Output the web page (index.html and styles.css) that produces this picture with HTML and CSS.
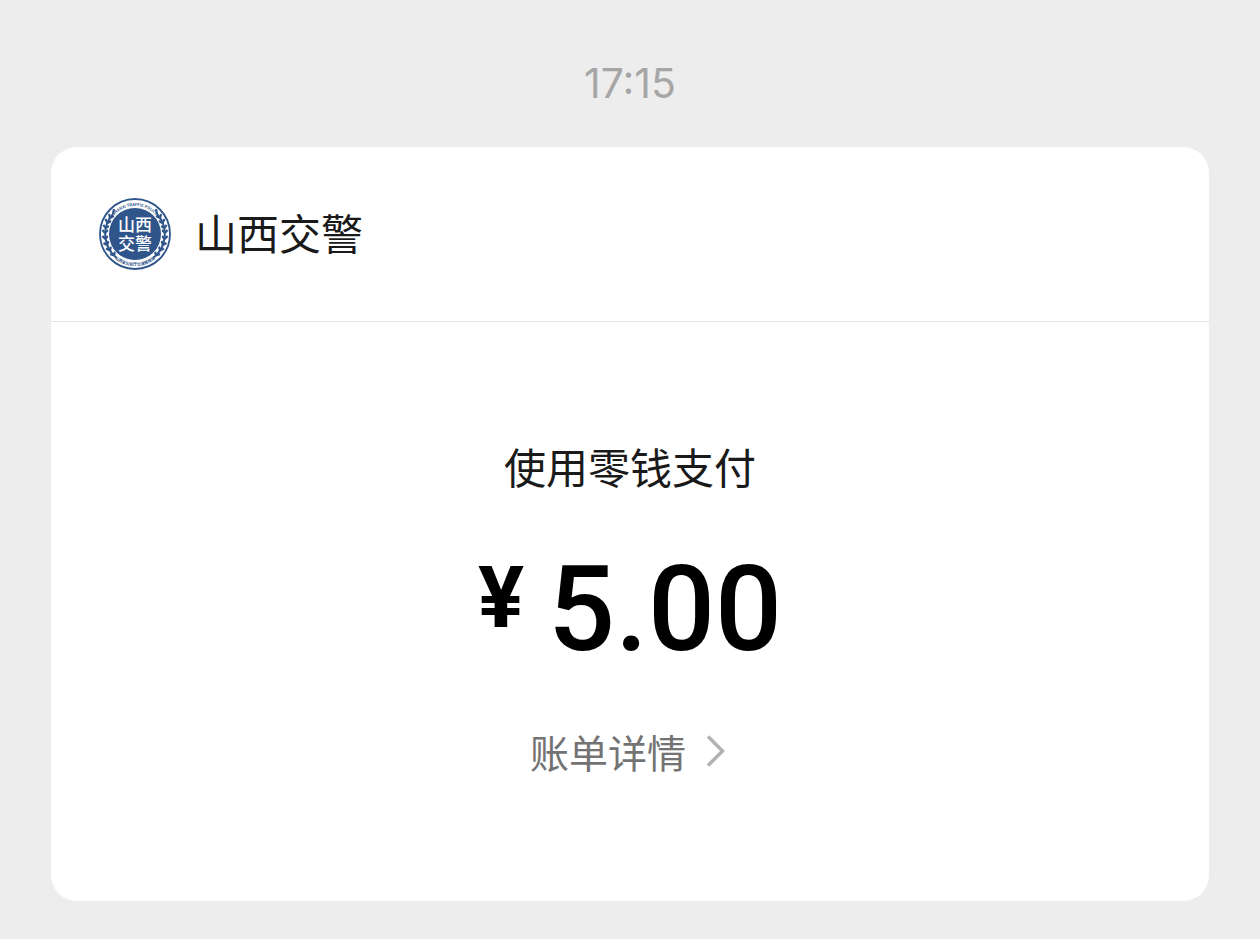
FILE: index.html
```
<!DOCTYPE html>
<html lang="zh-CN">
<head>
  <meta charset="UTF-8" />
  <meta name="viewport" content="width=device-width, initial-scale=1.0"/>
  <title>山西交警</title>
  <link rel="stylesheet" href="styles.css">
</head>
<body>
  <time class="time" datetime="17:15">17:15</time>

  <main class="card">
    <header class="card-header">
      <svg class="logo" viewBox="0 0 72 72" aria-hidden="true">
        <defs>
          <path id="arc-top" d="M8 36a28 28 0 0 1 56 0" />
          <path id="arc-bottom" d="M4 36a32 32 0 0 0 64 0" />
          <!-- wheat ear, left side -->
          <g id="ear">
            <path d="M18 60A30 30 0 0 1 14 16" fill="none" stroke="#2f558b" stroke-width="2" />
            <g fill="none" stroke="#2f558b" stroke-width="2.2">
              <path d="M14 16l1-5M11 20l-1-4M11 20l4-2M8.500 25l-2-4M8.500 25l4-2M6.800 30l-2.500-3M6.800 30l3-2M6 35l-2.500-3M6 35l3-3M6.300 41l-3-3M6.300 41l2.500-3M8 47l-3.500-2M8 47l1.500-4M11 52.500l-4-2M11 52.500l1-4M15 57.500l-4-1.500M15 57.500l1-4" />
            </g>
          </g>
        </defs>
        <circle cx="36" cy="36" r="35" fill="#fff" stroke="#2f558b" stroke-width="1.8" />
        <use href="#ear" />
        <use href="#ear" transform="matrix(-1 0 0 1 72 0)" />
        <circle cx="36" cy="36" r="26.5" fill="#2f558b" stroke="#fff" />
        <g class="logo-ring">
          <text><textPath href="#arc-top" startOffset="50%">SHANXI TRAFFIC POLICE</textPath></text>
          <text><textPath href="#arc-bottom" startOffset="50%">山西省公安厅交通管理局</textPath></text>
        </g>
        <g class="logo-name">
          <text x="36" y="33">山西</text>
          <text x="36" y="52">交警</text>
        </g>
      </svg>
      <h1 class="name">山西交警</h1>
    </header>

    <section class="card-body">
      <h2 class="method">使用零钱支付</h2>
      <p class="amount"><span class="currency">¥</span>5.00</p>
      <a href="#" class="detail">
        账单详情
        <svg class="arrow" viewBox="0 0 24 34" aria-hidden="true">
          <path d="M2 2.5L16.5 17L2 31.5" />
        </svg>
      </a>
    </section>
  </main>
</body>
</html>
```
FILE: styles.css
```
* {
  margin: 0;
  padding: 0;
  box-sizing: border-box;
}

body {
  padding: 59px 51px 38px;
  background: #ededed;
  color: #1a1a1a;
  font-family: "Noto Sans CJK SC", sans-serif;
}

.time {
  display: block;
  margin-bottom: 40px;
  color: #a6a6a6;
  font-family: Inter, sans-serif;
  font-size: 41px;
  line-height: 48px;
  text-align: center;
}

.card {
  background: #fff;
  border-radius: 26px;
}

.card-header {
  display: flex;
  align-items: center;
  gap: 24px;
  padding: 51px 48px;
  border-bottom: 1px solid #e5e5e5;
}

.logo {
  width: 72px;
  height: 72px;
}

.logo-ring {
  fill: #2f558b;
  font-size: 4px;
  font-weight: 700;
  text-anchor: middle;
}

.logo-name {
  fill: #fff;
  font-size: 17px;
  font-weight: 500;
  text-anchor: middle;
}

.name,
.method {
  padding-bottom: 4px;
  font-size: 42px;
  font-weight: 400;
  line-height: 60px;
}

.card-body {
  display: flex;
  flex-direction: column;
  align-items: center;
  padding: 114px 48px 120px;
}

.amount {
  display: flex;
  align-items: flex-start;
  gap: 24px;
  margin: 40px 0 41px;
  color: #000;
  font-family: Roboto, sans-serif;
  font-size: 118px;
  font-weight: 500;
  line-height: 140px;
}

.currency {
  font-size: 86px;
  font-weight: 700;
  line-height: 116px;
}

.detail {
  display: flex;
  align-items: center;
  gap: 20px;
  color: #737373;
  font-size: 39px;
  line-height: 60px;
  text-decoration: none;
}

.arrow {
  width: 24px;
  height: 34px;
  fill: none;
  stroke: #b2b2b2;
  stroke-width: 3.5;
}
```
